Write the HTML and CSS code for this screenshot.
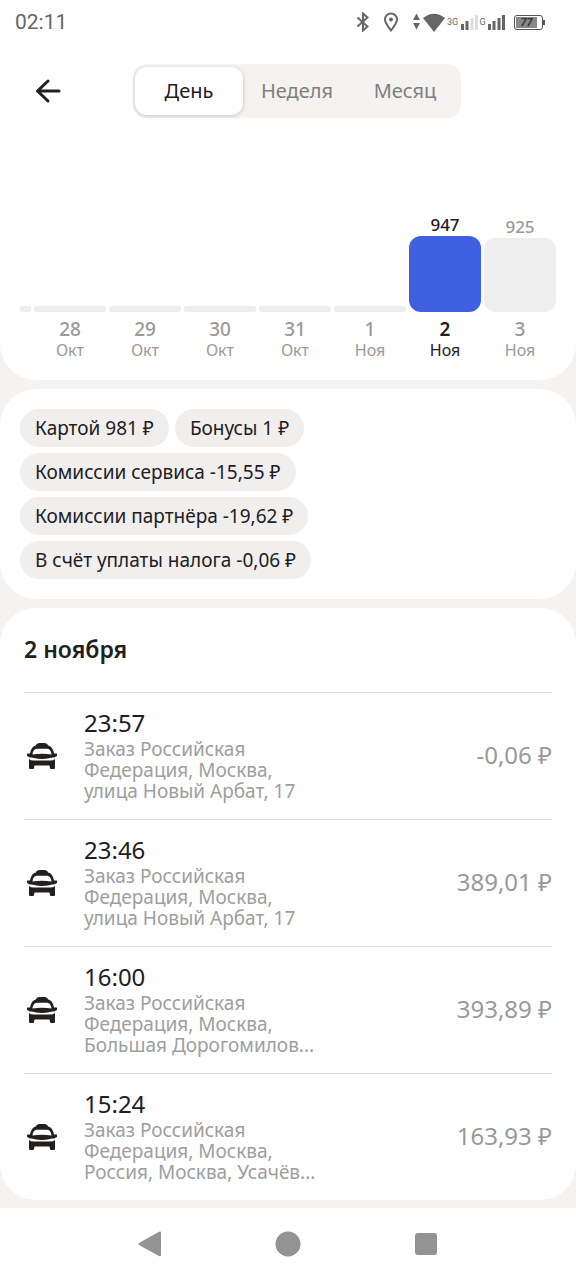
FILE: index.html
```html
<!DOCTYPE html>
<html lang="ru">
<head>
<meta charset="utf-8">
<meta name="viewport" content="width=device-width, initial-scale=1">
<title>Заказы за день</title>
<link rel="stylesheet" href="styles.css">
</head>
<body>
<svg class="defs" aria-hidden="true">
  <symbol id="taxi" viewBox="0 0 32 28">
    <path fill-rule="evenodd" d="M10 3.500C10.500 1.500 12 1 16 1S21.500 1.500 22 3.500C25 4 27 6.500 28 11.500H30.500Q31 11.500 31 12V13.500Q31 14 30.500 14.200L28 15.500H4L1.500 14.200Q1 14 1 13.500V12Q1 11.500 1.500 11.500H4C5 6.500 7 4 10 3.500ZM6.500 12.500Q16 10.800 25.500 12.500C25 8.500 23.500 6.800 20 6.800H12C8.500 6.800 7 8.500 6.500 12.500Z"/>
    <path d="M4 14H28Q24 17 16 17T4 14Z"/>
    <path d="M3 17Q4.500 18.600 8 18.600H24Q27.500 18.600 29 17V26Q29 27 28 27H25Q24 27 24 26L23.500 23.500H8.500L8 26Q8 27 7 27H4Q3 27 3 26Z"/>
  </symbol>
</svg>

<section class="panel summary">
  <div class="status">
    <time>02:11</time>
    <div class="status-icons">
      <svg class="bluetooth" width="14" height="20" viewBox="0 0 14 20"><path d="M1.500 5.500 11.500 14.500 7 18.500V1.500L11.500 5.500 1.500 14.500"/></svg>
      <svg class="pin" width="16" height="20" viewBox="0 0 16 20"><path d="M8 18.500C5 14.500 2 11 2 7.500A6 6 0 0 1 14 7.500C14 11 11 14.500 8 18.500Z"/><circle cx="8" cy="7.500" r="2"/></svg>
      <svg class="wifi" width="34" height="20" viewBox="0 0 34 20"><path d="M5.500 1.500 9 8H2ZM2 11H9L5.500 17.500ZM12 6Q23-2.500 34 6L23 20Z"/></svg>
      <span class="net wide">3G</span>
      <svg class="signal" width="18" height="16" viewBox="0 0 18 16"><path d="M1 10h3v6H1zM5.500 7h3v9h-3z"/><path class="weak" d="M10.500 4h3v12h-3zM15 1h3v15h-3z"/></svg>
      <span class="net">G</span>
      <svg class="signal" width="18" height="16" viewBox="0 0 18 16"><path d="M1 10h3v6H1zM5.500 7h3v9h-3zM10.500 4h3v12h-3zM15 1h3v15h-3z"/></svg>
      <span class="battery"><span class="charge">77</span></span>
    </div>
  </div>

  <header class="toolbar">
    <button class="back" type="button" aria-label="Назад">
      <svg width="26" height="26" viewBox="0 0 26 26"><path d="M24 13H2.500M13 3 2.500 13 13 23"/></svg>
    </button>
    <div class="tabs" role="tablist">
      <button class="tab active" type="button" role="tab" aria-selected="true">День</button>
      <button class="tab" type="button" role="tab" aria-selected="false">Неделя</button>
      <button class="tab" type="button" role="tab" aria-selected="false">Месяц</button>
    </div>
  </header>

  <div class="chart">
    <div class="day"><div class="bar"></div></div>
    <div class="day"><div class="bar"></div><b>28</b><span>Окт</span></div>
    <div class="day"><div class="bar"></div><b>29</b><span>Окт</span></div>
    <div class="day"><div class="bar"></div><b>30</b><span>Окт</span></div>
    <div class="day"><div class="bar"></div><b>31</b><span>Окт</span></div>
    <div class="day"><div class="bar"></div><b>1</b><span>Ноя</span></div>
    <div class="day selected"><em>947</em><div class="bar filled" style="height:76px"></div><b>2</b><span>Ноя</span></div>
    <div class="day"><em>925</em><div class="bar filled" style="height:74px"></div><b>3</b><span>Ноя</span></div>
  </div>
</section>

<section class="panel chips">
  <span class="chip">Картой 981 ₽</span>
  <span class="chip">Бонусы 1 ₽</span>
  <span class="chip">Комиссии сервиса -15,55 ₽</span>
  <span class="chip">Комиссии партнёра -19,62 ₽</span>
  <span class="chip">В счёт уплаты налога -0,06 ₽</span>
</section>

<section class="panel orders">
  <h2>2 ноября</h2>
  <ul>
    <li><svg class="taxi"><use href="#taxi"/></svg><div class="info"><time>23:57</time><p>Заказ Российская<br>Федерация, Москва,<br>улица Новый Арбат, 17</p></div><span class="sum">-0,06 ₽</span></li>
    <li><svg class="taxi"><use href="#taxi"/></svg><div class="info"><time>23:46</time><p>Заказ Российская<br>Федерация, Москва,<br>улица Новый Арбат, 17</p></div><span class="sum">389,01 ₽</span></li>
    <li><svg class="taxi"><use href="#taxi"/></svg><div class="info"><time>16:00</time><p>Заказ Российская<br>Федерация, Москва,<br>Большая Дорогомилов...</p></div><span class="sum">393,89 ₽</span></li>
    <li><svg class="taxi"><use href="#taxi"/></svg><div class="info"><time>15:24</time><p>Заказ Российская<br>Федерация, Москва,<br>Россия, Москва, Усачёв...</p></div><span class="sum">163,93 ₽</span></li>
  </ul>
</section>

<nav class="system">
  <button type="button" aria-label="Назад"><svg width="26" height="26" viewBox="0 0 26 26"><path d="M2 12 22 .8Q24 0 24 2V24Q24 26 22 25L2 14Q.5 13 2 12Z"/></svg></button>
  <button type="button" aria-label="Домой"><svg width="26" height="26" viewBox="0 0 26 26"><circle cx="13" cy="13" r="12.500"/></svg></button>
  <button type="button" aria-label="Недавние"><svg width="26" height="26" viewBox="0 0 26 26"><rect x="2" y="2" width="22" height="22" rx="3"/></svg></button>
</nav>
</body>
</html>
```
FILE: styles.css
```css
* {
  box-sizing: border-box;
}

body {
  margin: 0;
  background: #f4f3f2;
  color: #21201f;
  font-family: "Noto Sans", "Open Sans", sans-serif;
  font-size: 19px;
}

button {
  margin: 0;
  padding: 0;
  border: 0;
  background: none;
  color: inherit;
  font: inherit;
}

svg {
  display: block;
  flex: none;
}

.defs {
  position: absolute;
  width: 0;
  height: 0;
}

.panel {
  margin-bottom: 9px;
  border-radius: 36px;
  background: #fff;
}

.summary {
  padding-bottom: 20px;
  border-radius: 0 0 36px 36px;
}

.status {
  display: flex;
  align-items: center;
  justify-content: space-between;
  height: 44px;
  padding: 0 33px 0 15px;
  color: #666;
  font-family: Roboto, sans-serif;
  font-size: 21px;
}

.status-icons {
  display: flex;
  align-items: center;
  fill: #666;
}

.bluetooth,
.pin {
  fill: none;
  stroke: #666;
  stroke-width: 2;
}

.bluetooth {
  margin-right: 13px;
}

.pin {
  margin-right: 12px;
}

.pin circle {
  fill: #666;
  stroke: none;
}

.net {
  width: 9px;
  font-size: 9px;
  text-align: center;
}

.net.wide {
  width: 15px;
}

.weak {
  fill: #ddd;
}

.battery {
  position: relative;
  width: 29px;
  height: 15px;
  margin-left: 9px;
  padding: 1px;
  border: 1px solid #555;
  border-radius: 3px;
}

.battery::after {
  content: "";
  position: absolute;
  top: 4px;
  right: -3px;
  width: 2px;
  height: 5px;
  background: #555;
}

.charge {
  display: block;
  width: 21px;
  background: #888;
  color: #333;
  font-size: 11px;
  font-style: italic;
  font-weight: 700;
  line-height: 11px;
  text-align: center;
}

.toolbar {
  display: grid;
  grid-template-columns: 114px 1fr 114px;
  align-items: center;
  padding-top: 20px;
}

.back {
  justify-self: start;
  margin-left: 35px;
}

.back svg {
  fill: none;
  stroke: #21201f;
  stroke-width: 3;
  stroke-linecap: round;
  stroke-linejoin: round;
}

.tabs {
  display: grid;
  grid-template-columns: repeat(3, 108px);
  justify-self: center;
  padding: 3px 2px;
  margin-left: 18px;
  border-radius: 14px;
  background: #f4f3f2;
  color: #807f7d;
}

.tab {
  height: 48px;
  padding-bottom: 2px;
  border-radius: 12px;
  font-size: 20px;
}

.tab.active {
  background: #fff;
  box-shadow: 0 1px 4px #0003;
  color: #21201f;
}

.chart {
  display: grid;
  grid-template-columns: 11px repeat(7, 1fr);
  gap: 3px;
  height: 242px;
  padding: 0 20px;
}

.day {
  display: grid;
  grid-template-rows: 1fr auto 28px 20px;
  align-content: end;
  justify-items: center;
  color: #999;
}

.day em {
  grid-row: 1;
  align-self: end;
  font-size: 17px;
  font-style: normal;
  font-weight: 500;
  line-height: 22px;
}

.bar {
  grid-row: 2;
  width: 100%;
  height: 6px;
  border-radius: 2px;
  background: #eee;
}

.bar.filled {
  border-radius: 12px;
}

.day b {
  grid-row: 3;
  align-self: end;
  font-size: 19px;
  font-weight: 500;
  line-height: 22px;
}

.day span {
  grid-row: 4;
  font-size: 16px;
  line-height: 20px;
}

.selected {
  color: #21201f;
}

.selected b {
  font-weight: 600;
}

.selected .bar {
  background: #3f60e0;
}

.chips {
  display: flex;
  flex-wrap: wrap;
  gap: 6px;
  padding: 20px 200px 20px 20px;
}

.chip {
  padding: 0 15px;
  border-radius: 19px;
  background: #f0efee;
  line-height: 38px;
}

.orders {
  margin-bottom: 8px;
  padding: 0 24px;
}

.orders h2 {
  margin: 0;
  padding-bottom: 2px;
  font-size: 23px;
  font-weight: 600;
  line-height: 82px;
}

.orders ul {
  margin: 0;
  padding: 0;
  list-style: none;
}

.orders li {
  display: flex;
  align-items: center;
  padding: 17px 0 17px 2px;
  border-top: 1px solid #dedddc;
}

.taxi {
  width: 32px;
  height: 28px;
  margin-right: 26px;
  fill: #21201f;
}

.info {
  flex: 1;
}

.info time {
  display: block;
  margin-bottom: 4px;
  font-size: 24px;
  line-height: 25px;
}

.info p {
  margin: 0;
  color: #9e9e9e;
  line-height: 21px;
}

.sum {
  padding-bottom: 4px;
  color: #999;
  font-size: 24px;
}

.system {
  display: flex;
  justify-content: center;
  gap: 112px;
  padding: 23px 0;
  background: #fff;
  fill: #939393;
}

.system button {
  width: 26px;
  height: 26px;
  fill: inherit;
}
```
